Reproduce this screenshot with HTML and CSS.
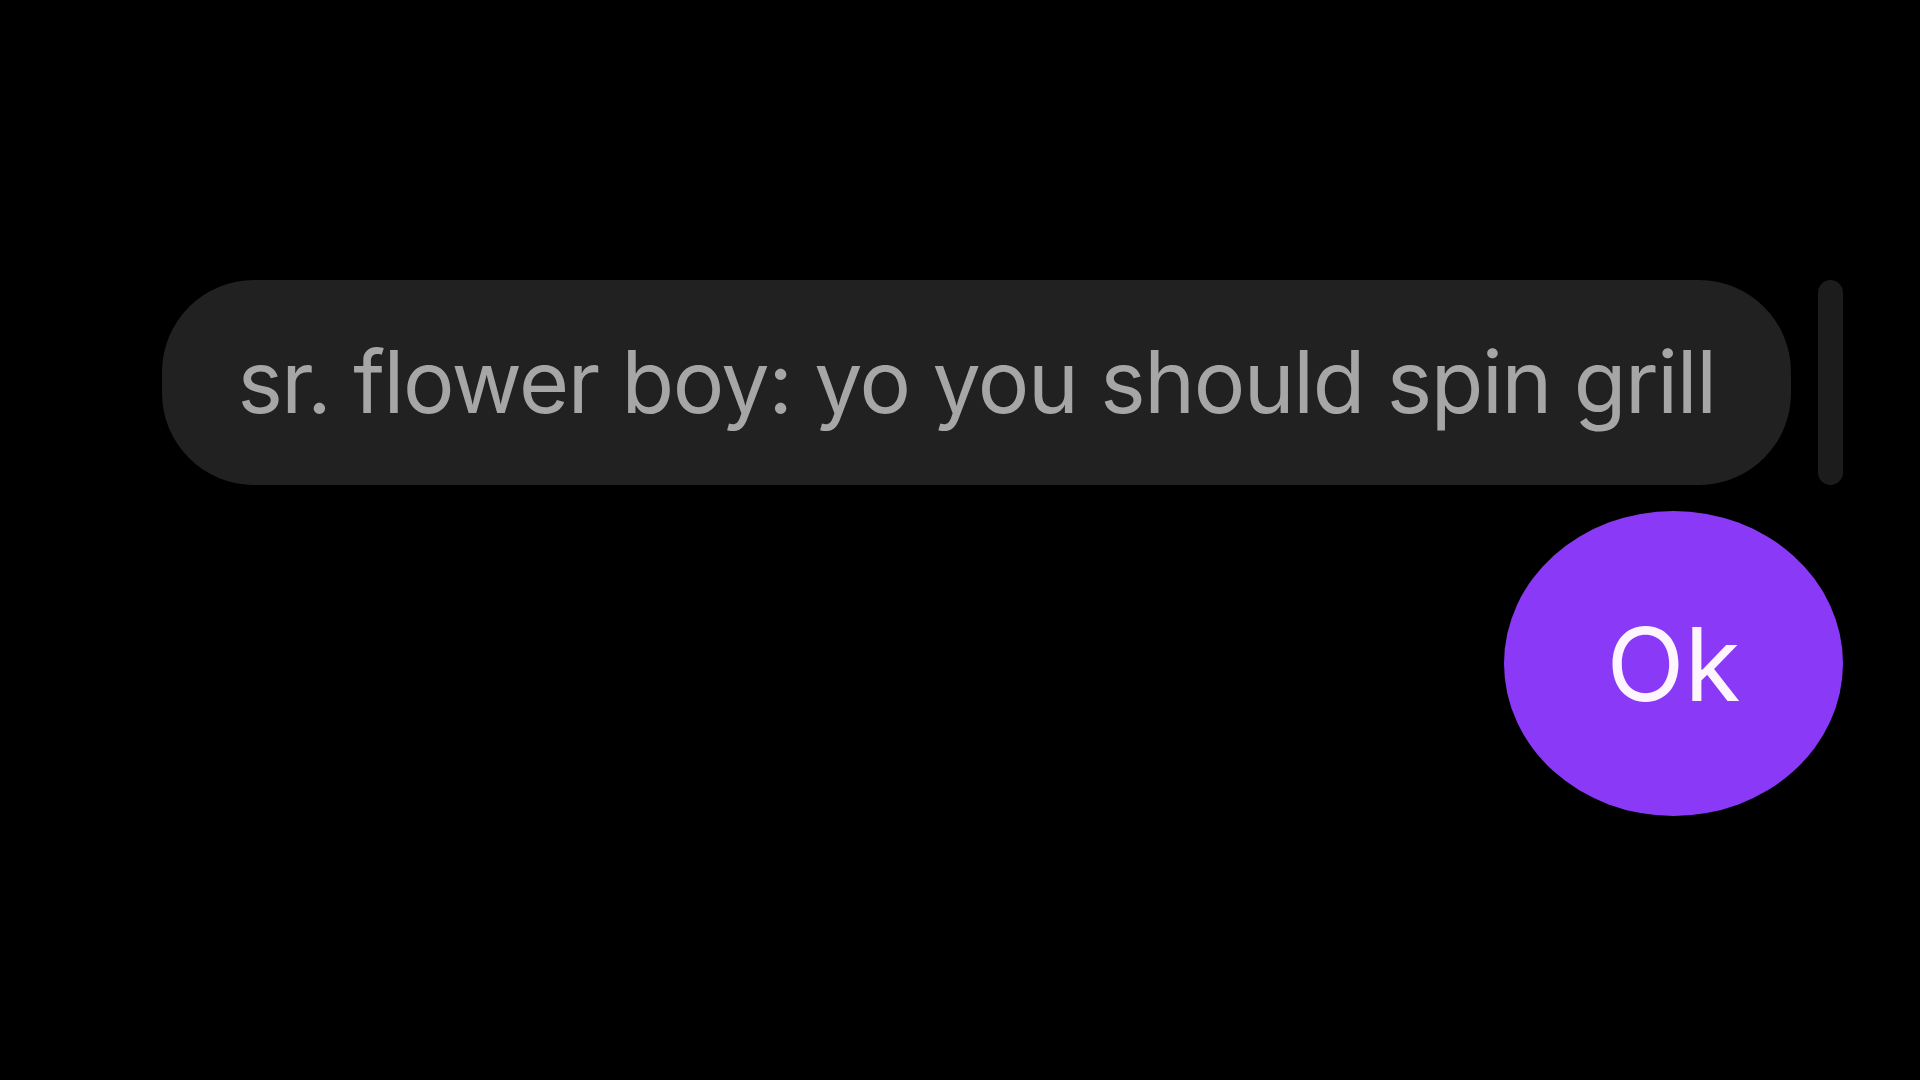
FILE: index.html
```html
<!DOCTYPE html>
<html lang="en">
<head>
<meta charset="utf-8">
<title>Chat</title>
<link rel="stylesheet" href="styles.css">
</head>
<body>
<main class="chat">
  <div class="row-incoming">
    <div class="bubble">
      <span class="bubble-text">sr. flower boy: yo you should spin grill</span>
    </div>
    <div class="scrollbar"></div>
  </div>
  <div class="row-outgoing">
    <div class="ok-bubble">
      <span class="ok-text">Ok</span>
    </div>
  </div>
</main>
</body>
</html>
```
FILE: styles.css
```css
html, body {
  margin: 0;
  padding: 0;
  background: #000;
  width: 1920px;
  height: 1080px;
  overflow: hidden;
}

.chat {
  display: flex;
  flex-direction: column;
  align-items: flex-start;
  padding: 280px 0 0 162px;
  gap: 26px;
}

.row-incoming {
  display: flex;
  align-items: stretch;
  gap: 27px;
}

.bubble {
  width: 1629px;
  height: 205px;
  background: #212121;
  border-radius: 92px;
  display: flex;
  align-items: center;
  justify-content: center;
  box-sizing: border-box;
}

.bubble-text {
  font-family: "Inter", "Liberation Sans", sans-serif;
  font-size: 86px;
  color: #a6a6a6;
  letter-spacing: -1.4px;
  line-height: 1;
  white-space: nowrap;
  margin-top: -1px;
}

.scrollbar {
  width: 25px;
  background: #1c1c1c;
  border-radius: 13px;
}

.row-outgoing {
  align-self: stretch;
  display: flex;
  justify-content: flex-end;
  padding-right: 77px;
}

.ok-bubble {
  width: 339px;
  height: 305px;
  border-radius: 50%;
  background: #8a3af6;
  display: flex;
  align-items: center;
  justify-content: center;
}

.ok-text {
  font-family: "Inter", "Liberation Sans", sans-serif;
  font-size: 102px;
  color: #fff5ff;
  line-height: 1;
  margin-top: 0;
}
```
